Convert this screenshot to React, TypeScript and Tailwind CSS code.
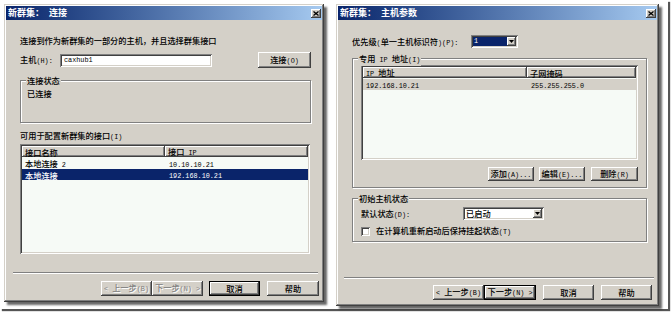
import React from "react";

const CJK = /[\u3000-\u9fff\uff00-\uffef]/;

function T({ s }: { s: string }) {
  const parts: { t: string; c: boolean }[] = [];
  for (const ch of s) {
    const c = CJK.test(ch);
    const last = parts[parts.length - 1];
    if (last && last.c === c) last.t += ch;
    else parts.push({ t: ch, c });
  }
  return (
    <>
      {parts.map((p, i) =>
        p.c ? (
          <span key={i}>{p.t}</span>
        ) : (
          <span key={i} className="font-['Liberation_Mono',monospace] text-[6.8px] font-normal whitespace-pre">
            {p.t}
          </span>
        )
      )}
    </>
  );
}

const raised =
  "bg-[#d4d0c8] shadow-[inset_-1px_-1px_#404040,inset_1px_1px_#ffffff,inset_-2px_-2px_#808080,inset_2px_2px_#d4d0c8]";
const sunken =
  "shadow-[inset_1px_1px_#808080,inset_-1px_-1px_#ffffff,inset_2px_2px_#404040,inset_-2px_-2px_#d4d0c8]";

function Btn({
  label,
  w,
  className = "",
  disabled = false,
  def = false,
}: {
  label: string;
  w: string;
  className?: string;
  disabled?: boolean;
  def?: boolean;
}) {
  return (
    <div
      className={`${w} h-[15px] flex items-center justify-center ${className} ${
        def
          ? "bg-[#d4d0c8] shadow-[inset_1px_1px_#000,inset_-1px_-1px_#000,inset_-2px_-2px_#404040,inset_2px_2px_#ffffff,inset_-3px_-3px_#808080]"
          : raised
      } ${disabled ? "text-[#808080] [text-shadow:1px_1px_0_#ffffff]" : "text-black"}`}
    >
      <span className="leading-[11px]">
        <T s={label} />
      </span>
    </div>
  );
}

function TitleBar({ a, b }: { a: string; b: string }) {
  return (
    <div className="mt-[2px] mx-[2px] h-[14px] flex items-center bg-linear-to-r from-[#0a246a] to-[#a6caf0] text-white font-bold text-[9px] leading-[14px]">
      <span className="ml-[2px]">{a}</span>
      <span className="ml-[5px]">{b}</span>
      <div
        className={`ml-auto mr-[1px] w-[10px] h-[9px] flex items-center justify-center ${raised}`}
      >
        <svg width="6" height="5" viewBox="0 0 6 5">
          <path d="M0.5 0.5 L5.5 4.5 M5.5 0.5 L0.5 4.5" stroke="#000" strokeWidth="1.3" />
        </svg>
      </div>
    </div>
  );
}

function GroupBox({
  label,
  className,
  children,
}: {
  label: string;
  className: string;
  children?: React.ReactNode;
}) {
  return (
    <div
      className={`relative border border-[#808080] shadow-[1px_1px_0_#ffffff,inset_1px_1px_0_#ffffff] ${className}`}
    >
      <div className="absolute left-[5px] top-[-7px] px-[1px] bg-[#d4d0c8] leading-[12px]">
        <T s={label} />
      </div>
      {children}
    </div>
  );
}

function Combo({ w, value, selected }: { w: string; value: string; selected?: boolean }) {
  return (
    <div className={`${w} h-[13px] bg-white ${sunken} p-[2px] flex`}>
      <div
        className={`flex-1 flex items-center pl-[1px] leading-[9px] ${
          selected ? "bg-[#0a246a] text-white" : "text-black"
        }`}
      >
        <T s={value} />
      </div>
      <div className={`w-[9px] h-[9px] flex items-center justify-center ${raised}`}>
        <svg width="5" height="3" viewBox="0 0 5 3">
          <path d="M0 0 H5 L2.5 3 Z" fill="#000" />
        </svg>
      </div>
    </div>
  );
}

function HeaderCell({ label, w }: { label: string; w: string }) {
  return (
    <div className={`${w} h-[11px] flex items-center pl-[3px] leading-[10px] overflow-hidden ${raised}`}>
      <span>
        <T s={label} />
      </span>
    </div>
  );
}

const dialogFrame =
  "bg-[#d4d0c8] flex flex-col shadow-[inset_-1px_-1px_#404040,inset_1px_1px_#d4d0c8,inset_-2px_-2px_#808080,inset_2px_2px_#ffffff,3px_3px_2px_rgba(0,0,0,0.6)]";

function Sep({ className }: { className: string }) {
  return <div className={`h-[2px] border-t border-[#808080] border-b border-b-white ${className}`} />;
}

function Row({ a, b, w, cls }: { a: string; b: string; w: string; cls: string }) {
  return (
    <div className={`h-[11px] flex items-center leading-[10px] overflow-hidden ${cls}`}>
      <div className={`${w} pl-[3px]`}>
        <T s={a} />
      </div>
      <div className="pl-[4px]">
        <T s={b} />
      </div>
    </div>
  );
}

function LeftDialog() {
  return (
    <div className={`w-[320px] h-[298px] ${dialogFrame}`}>
      <TitleBar a="新群集：" b="连接" />
      <div className="ml-[16px] mt-[14px] h-[12px] leading-[12px]">
        <T s="连接到作为新群集的一部分的主机，并且选择群集接口" />
      </div>
      <div className="ml-[16px] mt-[6px] h-[16px] flex items-center">
        <div className="w-[40px] leading-[12px]">
          <T s="主机(H):" />
        </div>
        <div className={`w-[152px] h-[13px] bg-white ${sunken} pl-[4px] flex items-center leading-[10px]`}>
          <T s="caxhub1" />
        </div>
        <div className={`ml-[46px] w-[53px] h-[16px] flex items-center justify-center ${raised}`}>
          <span className="leading-[12px]">
            <T s="连接(O)" />
          </span>
        </div>
      </div>
      <GroupBox label="连接状态" className="ml-[16px] mt-[12px] w-[291px] h-[43px]">
        <div className="ml-[6px] mt-[6px] leading-[12px]">已连接</div>
      </GroupBox>
      <div className="ml-[16px] mt-[6px] h-[12px] leading-[12px]">
        <T s="可用于配置新群集的接口(I)" />
      </div>
      <div className={`ml-[16px] mt-[3px] w-[290px] h-[110px] bg-[#f6faf6] ${sunken} p-[2px] flex flex-col`}>
        <div className="flex">
          <HeaderCell label="接口名称" w="w-[143px]" />
          <HeaderCell label="接口 IP" w="flex-1" />
        </div>
        <Row a="本地连接 2" b="10.10.10.21" w="w-[143px]" cls="mt-[1px]" />
        <Row a="本地连接" b="192.168.10.21" w="w-[143px]" cls="bg-[#0a246a] text-white" />
      </div>
      <Sep className="ml-[9px] mt-[18px] w-[305px]" />
      <div className="mt-[7px] flex justify-end pr-[5px]">
        <Btn label="< 上一步(B)" w="w-[51px]" disabled />
        <Btn label="下一步(N) >" w="w-[51px]" disabled />
        <Btn label="取消" w="w-[51px]" className="ml-[6px]" def />
        <Btn label="帮助" w="w-[52px]" className="ml-[7px]" />
      </div>
    </div>
  );
}

function RightDialog() {
  return (
    <div className={`ml-[12px] w-[323px] h-[302px] ${dialogFrame}`}>
      <TitleBar a="新群集：" b="主机参数" />
      <div className="ml-[16px] mt-[15px] h-[13px] flex items-center">
        <div className="w-[119px] leading-[12px]">
          <T s="优先级(单一主机标识符)(P):" />
        </div>
        <Combo w="w-[47px]" value="1" selected />
      </div>
      <GroupBox label="专用 IP 地址(I)" className="ml-[16px] mt-[10px] w-[295px] h-[130px]">
        <div className={`ml-[8px] mt-[6px] w-[277px] h-[95px] bg-[#f6faf6] ${sunken} p-[2px] flex flex-col`}>
          <div className="flex">
            <HeaderCell label="IP 地址" w="w-[164px]" />
            <HeaderCell label="子网掩码" w="flex-1" />
          </div>
          <Row a="192.168.10.21" b="255.255.255.0" w="w-[164px]" cls="mt-[1px] bg-[#d4d0c8]" />
        </div>
        <div className="mt-[7px] flex justify-end pr-[8px]">
          <Btn label="添加(A)..." w="w-[46px] !h-[14px]" />
          <Btn label="编辑(E)..." w="w-[46px] !h-[14px]" className="ml-[5px]" />
          <Btn label="删除(R)" w="w-[47px] !h-[14px]" className="ml-[6px]" />
        </div>
      </GroupBox>
      <GroupBox label="初始主机状态" className="ml-[16px] mt-[10px] w-[295px] h-[44px]">
        <div className="ml-[8px] mt-[8px] h-[13px] flex items-center">
          <div className="w-[102px] leading-[12px]">
            <T s="默认状态(D):" />
          </div>
          <Combo w="w-[81px]" value="已启动" />
        </div>
        <div className="ml-[8px] mt-[5px] h-[12px] flex items-center">
          <div className={`w-[9px] h-[9px] bg-white ${sunken}`} />
          <div className="ml-[6px] leading-[12px]">
            <T s="在计算机重新启动后保持挂起状态(T)" />
          </div>
        </div>
      </GroupBox>
      <Sep className="ml-[8px] mt-[35px] w-[310px]" />
      <div className="mt-[6px] flex justify-end pr-[7px]">
        <Btn label="< 上一步(B)" w="w-[51px]" />
        <Btn label="下一步(N) >" w="w-[52px]" def />
        <Btn label="取消" w="w-[51px]" className="ml-[7px]" />
        <Btn label="帮助" w="w-[51px]" className="ml-[7px]" />
      </div>
    </div>
  );
}

export default function App() {
  return (
    <div className="w-[671px] h-[314px] bg-white font-['Noto_Sans_CJK_SC',sans-serif] font-medium text-[8.2px] text-black">
      <div className="w-[668px] h-[309px] bg-white shadow-[2px_2px_1px_#555555] flex items-start pl-[4px] pt-[4px]">
        <LeftDialog />
        <RightDialog />
      </div>
    </div>
  );
}
